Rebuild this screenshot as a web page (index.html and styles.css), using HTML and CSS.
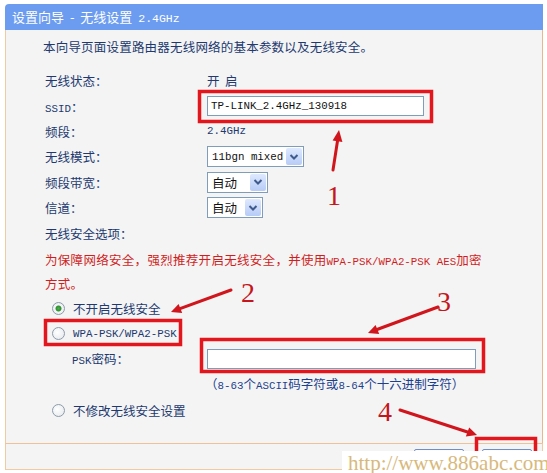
FILE: index.html
```html
<!DOCTYPE html>
<html lang="zh-CN">

<head>
    <meta charset="UTF-8">
    <title>设置向导 - 无线设置</title>
    <link rel="stylesheet" href="styles.css">
</head>

<body>
    <div class="page">
        <div class="panel">
            <div class="panel-title">设置向导 - 无线设置 <span class="en">2.4GHz</span></div>

            <div class="panel-body">
                <p class="intro">本向导页面设置路由器无线网络的基本参数以及无线安全。</p>

                <div class="form">
                    <span class="label">无线状态：</span>
                    <span class="value">开&nbsp;&nbsp;启</span>

                    <span class="label"><span class="en">SSID</span>：</span>
                    <span class="value"><input class="textbox ssid en" type="text" value="TP-LINK_2.4GHz_130918"></span>

                    <span class="label">频段：</span>
                    <span class="value en">2.4GHz</span>

                    <span class="label">无线模式：</span>
                    <span class="value">
                        <span class="select w-mode"><span class="en">11bgn mixed</span><span class="drop"><svg width="10" height="8" viewBox="0 0 10 8"><polyline points="1.5,2 5,5.5 8.5,2" fill="none" stroke="#3f5a8c" stroke-width="2"/></svg></span></span>
                    </span>

                    <span class="label">频段带宽：</span>
                    <span class="value">
                        <span class="select w-band">自动<span class="drop"><svg width="10" height="8" viewBox="0 0 10 8"><polyline points="1.5,2 5,5.5 8.5,2" fill="none" stroke="#3f5a8c" stroke-width="2"/></svg></span></span>
                    </span>

                    <span class="label">信道：</span>
                    <span class="value">
                        <span class="select w-chan">自动<span class="drop"><svg width="10" height="8" viewBox="0 0 10 8"><polyline points="1.5,2 5,5.5 8.5,2" fill="none" stroke="#3f5a8c" stroke-width="2"/></svg></span></span>
                    </span>
                </div>

                <div class="section-title">无线安全选项：</div>
                <p class="warn">为保障网络安全，强烈推荐开启无线安全，并使用<span class="en">WPA-PSK/WPA2-PSK AES</span>加密<br>方式。</p>

                <div class="options">
                    <label class="opt"><input type="radio" name="sec" checked>不开启无线安全</label>
                    <label class="opt"><input type="radio" name="sec"><span class="en">WPA-PSK/WPA2-PSK</span></label>
                    <div class="psk-row">
                        <span class="psk-label"><span class="en">PSK</span>密码：</span>
                        <input class="textbox psk" type="text" value="">
                    </div>
                    <div class="hint">（<span class="en">8-63</span>个<span class="en">ASCII</span>码字符或<span class="en">8-64</span>个十六进制字符）</div>
                    <label class="opt opt-last"><input type="radio" name="sec">不修改无线安全设置</label>
                </div>
            </div>

            <div class="panel-foot">
                <button class="btn">上一步</button>
                <button class="btn">下一步</button>
            </div>
        </div>

        <!-- 标注 -->
        <svg class="marks" width="547" height="473" viewBox="0 0 547 473">
            <g fill="none" stroke="#e2161c" stroke-width="3.5">
                <rect x="199.5" y="91.5" width="232" height="30"/>
                <rect x="45.5" y="320.5" width="135" height="24"/>
                <rect x="201.5" y="339.5" width="282" height="32"/>
                <rect x="476.5" y="438.5" width="59" height="40"/>
            </g>
            <g stroke="#d0161c" stroke-width="3" stroke-linecap="round">
                <line x1="333" y1="170" x2="337.5" y2="141"/>
                <line x1="231" y1="290" x2="180" y2="308.6"/>
                <line x1="438" y1="307" x2="377" y2="329.5"/>
                <line x1="400" y1="410" x2="467.5" y2="432"/>
            </g>
            <g fill="#d0161c">
                <polygon points="339,130 342.4,142 332.6,140.4"/>
                <polygon points="171,312 182.2,313 178.6,304"/>
                <polygon points="368,333 379.2,334 375.6,325"/>
                <polygon points="477,435 465.8,436.6 469.2,427.4"/>
            </g>
            <g class="num" fill="#c4161c">
                <text x="334" y="205" text-anchor="middle">1</text>
                <text x="248" y="302" text-anchor="middle">2</text>
                <text x="444" y="311" text-anchor="middle">3</text>
                <text x="385" y="421" text-anchor="middle">4</text>
            </g>
        </svg>

        <div class="watermark">http://www.886abc.com</div>
    </div>
</body>

</html>
```

FILE: styles.css
```css
body {
    margin: 0;
    background: #fff;
    font-family: "Noto Sans CJK SC", sans-serif;
    font-size: 12.5px;
    color: #22396f;
}

.en {
    font-family: "Liberation Mono", monospace;
    font-size: 10.8px;
}

.page {
    position: relative;
    width: 547px;
    height: 473px;
    overflow: hidden;
}

/* 面板 */
.panel {
    margin: 4px 0 0 5px;
    width: 538px;
}

.panel-title {
    height: 26px;
    line-height: 26px;
    background: #6b9cf0;
    color: #fff;
    font-size: 13px;
    padding-left: 7px;
    border-radius: 4px 0 0 0;
    word-spacing: 3px;
}

.panel-title .en {
    font-size: 11.5px;
    word-spacing: 0;
}

.panel-body {
    background: #f4f4f4;
    border-left: 1px solid #f1caa2;
    border-right: 1px solid #eab68c;
    padding: 8px 0 20px 39px;
}

.intro {
    margin: 0 0 0 -2px;
    line-height: 18px;
    letter-spacing: 0.2px;
}

.form {
    display: grid;
    grid-template-columns: 162px 1fr;
    grid-auto-rows: 25.4px;
    align-items: center;
    margin-top: 12px;
}

.value {
    display: flex;
    align-items: center;
}

/* 输入框和下拉框 */
.textbox {
    box-sizing: border-box;
    height: 20px;
    border: 1px solid #7f9db9;
    background: #fff;
    color: #111;
    padding: 0 3px;
    margin: 0;
    outline: none;
}

.ssid {
    width: 217px;
}

.psk {
    width: 269px;
}

.select {
    box-sizing: border-box;
    display: inline-flex;
    align-items: center;
    justify-content: space-between;
    height: 21px;
    border: 1px solid #7f9db9;
    background: #fff;
    color: #111;
    padding: 0 1px 0 4px;
}

.w-mode {
    width: 97px;
}

.w-band {
    width: 61px;
}

.w-chan {
    width: 56px;
}

.drop {
    display: flex;
    align-items: center;
    justify-content: center;
    width: 16px;
    height: 17px;
    border-radius: 2px;
    background: linear-gradient(#dfe9fe, #b6cbf6);
}

.section-title {
    height: 27px;
    line-height: 27px;
}

.warn {
    margin: 2px 0 0;
    line-height: 21px;
    color: #d01e1e;
    letter-spacing: 0.3px;
}

.warn .en {
    letter-spacing: 0;
}

/* 单选项 */
.options {
    margin-top: 2px;
}

.opt {
    display: flex;
    align-items: center;
    height: 25px;
    padding-left: 7px;
}

.opt-last {
    margin-top: 2px;
}

.opt input {
    appearance: none;
    width: 13px;
    height: 13px;
    margin: 0 8px 0 0;
    border: 1px solid #8d9bab;
    border-radius: 50%;
    background: radial-gradient(circle at 40% 40%, #fff, #e3e6ea);
}

.opt input:checked {
    background: radial-gradient(circle, #4cae4c 0, #2f8f2f 2.6px, #f4f6f8 3.4px, #e3e6ea 100%);
}

.psk-row {
    display: flex;
    align-items: center;
    height: 25px;
    padding-left: 27px;
}

.psk-label {
    width: 135px;
}

.hint {
    height: 25px;
    line-height: 25px;
    padding-left: 160px;
    color: #1d3f8e;
}

/* 底部按钮 */
.panel-foot {
    display: flex;
    justify-content: flex-end;
    gap: 18px;
    height: 27px;
    padding: 5px 10px 0 0;
    box-sizing: border-box;
    background: #f4f4f4;
    border: 1px solid #f1caa2;
    border-top-color: #f0c096;
}

.btn {
    width: 50px;
    height: 22px;
    padding: 0;
    border: 1px solid #6f8ec8;
    border-radius: 2px;
    background: linear-gradient(#fdfdfe, #dde4f1);
    font-family: inherit;
    font-size: 12.5px;
    color: #111;
}

/* 标注层 */
.marks {
    position: absolute;
    top: 0;
    left: 0;
}

.num text {
    font-family: "Liberation Serif", serif;
    font-size: 28px;
}

.watermark {
    position: absolute;
    right: 0;
    bottom: 0;
    width: 199px;
    height: 22px;
    padding-left: 6px;
    background: #fff;
    font-family: "Liberation Serif", serif;
    font-size: 21px;
    line-height: 24px;
    color: #d8b97c;
    white-space: nowrap;
}
```
